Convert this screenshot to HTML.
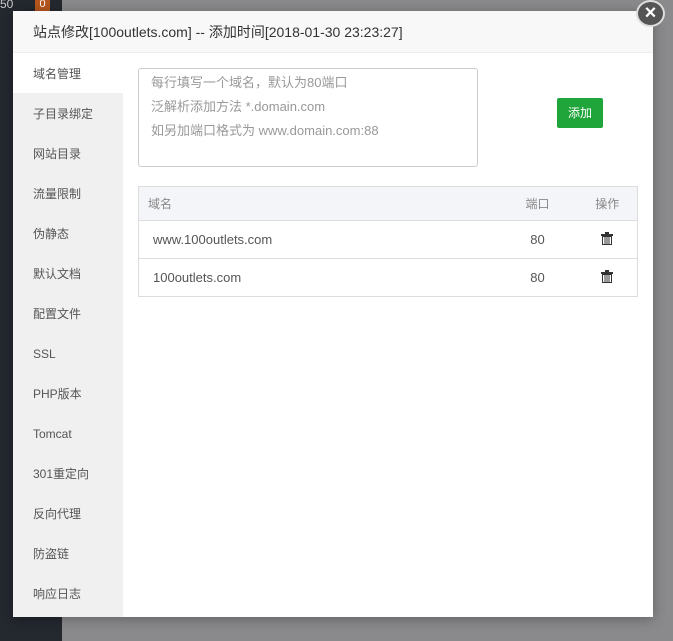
<!DOCTYPE html>
<html><head><meta charset="utf-8"><style>
*{margin:0;padding:0;box-sizing:border-box}
body{width:673px;height:641px;overflow:hidden;background:#8a8a8c;font-family:"Liberation Sans","Noto Sans CJK SC",sans-serif;position:relative}
.dark{position:absolute;left:0;top:0;width:62px;height:641px;background:#24282f}
.badge{position:absolute;left:35px;top:0;width:15px;height:11px;background:#b5561d;color:#fff;font-size:11px;text-align:center;line-height:8px}
.n50{position:absolute;left:0;top:0;color:#ccc;font-size:12px;line-height:8px}
.modal{position:absolute;left:13px;top:11px;width:640px;height:606px;background:#fff;box-shadow:0 2px 12px rgba(0,0,0,.3)}
.title{height:42px;background:#f8f8f8;border-bottom:1px solid #eee;font-size:14px;color:#333;line-height:42px;padding-left:20px}
.side{position:absolute;left:0;top:42px;width:110px;height:564px;background:#f0f0f0}
.side div{height:40px;line-height:42px;padding-left:20px;font-size:12px;color:#555}
.side div.on{background:#fff}
.ta{position:absolute;left:125px;top:57px;width:340px;height:99px;border:1px solid #ccc;border-radius:3px;padding:2px 12px;font-size:13px;color:#999;line-height:24px}
.btn{position:absolute;left:544px;top:87px;width:46px;height:30px;background:#20a53a;color:#fff;font-size:12px;text-align:center;line-height:30px;border-radius:2px}
table{position:absolute;left:125px;top:175px;width:500px;border-collapse:collapse;font-size:13px;color:#555;border:1px solid #ddd}
th{background:#f4f5f9;height:34px;font-weight:normal;color:#888;font-size:12px;text-align:left;border-bottom:1px solid #ddd}
td{height:38px;border-bottom:1px solid #ddd}
.close{position:absolute;left:636px;top:0;width:29px;height:27px;border-radius:50%;background:#555;border:2px solid #ddd;color:#fff;font-size:20px;text-align:center;line-height:22px;font-weight:bold}
</style></head><body>
<div class="dark"></div><div class="n50">50</div><div class="badge">0</div>
<div class="modal">
<div class="title">站点修改[100outlets.com] -- 添加时间[2018-01-30 23:23:27]</div>
<div class="side">
<div class="on">域名管理</div><div>子目录绑定</div><div>网站目录</div><div>流量限制</div><div>伪静态</div><div>默认文档</div><div>配置文件</div><div>SSL</div><div>PHP版本</div><div>Tomcat</div><div>301重定向</div><div>反向代理</div><div>防盗链</div><div>响应日志</div>
</div>
<div class="ta">每行填写一个域名，默认为80端口<br>泛解析添加方法 *.domain.com<br>如另加端口格式为 www.domain.com:88</div>
<div class="btn">添加</div>
<table>
<tr><th style="padding-left:9px">域名</th><th style="width:80px;text-align:center">端口</th><th style="width:60px;text-align:center">操作</th></tr>
<tr><td style="padding-left:14px">www.100outlets.com</td><td style="text-align:center">80</td><td style="text-align:center"><svg width="12" height="13" viewBox="0 0 12 13"><rect x="4" y="0" width="4" height="2" fill="#333"/><rect x="0" y="2" width="12" height="2" fill="#333"/><path d="M1.5 4.5h9v8h-9z" fill="none" stroke="#333"/><path d="M4 5v7M6 5v7M8 5v7" stroke="#333"/></svg></td></tr>
<tr><td style="padding-left:14px">100outlets.com</td><td style="text-align:center">80</td><td style="text-align:center"><svg width="12" height="13" viewBox="0 0 12 13"><rect x="4" y="0" width="4" height="2" fill="#333"/><rect x="0" y="2" width="12" height="2" fill="#333"/><path d="M1.5 4.5h9v8h-9z" fill="none" stroke="#333"/><path d="M4 5v7M6 5v7M8 5v7" stroke="#333"/></svg></td></tr>
</table>
</div>
<div class="close">×</div>
</body></html>
